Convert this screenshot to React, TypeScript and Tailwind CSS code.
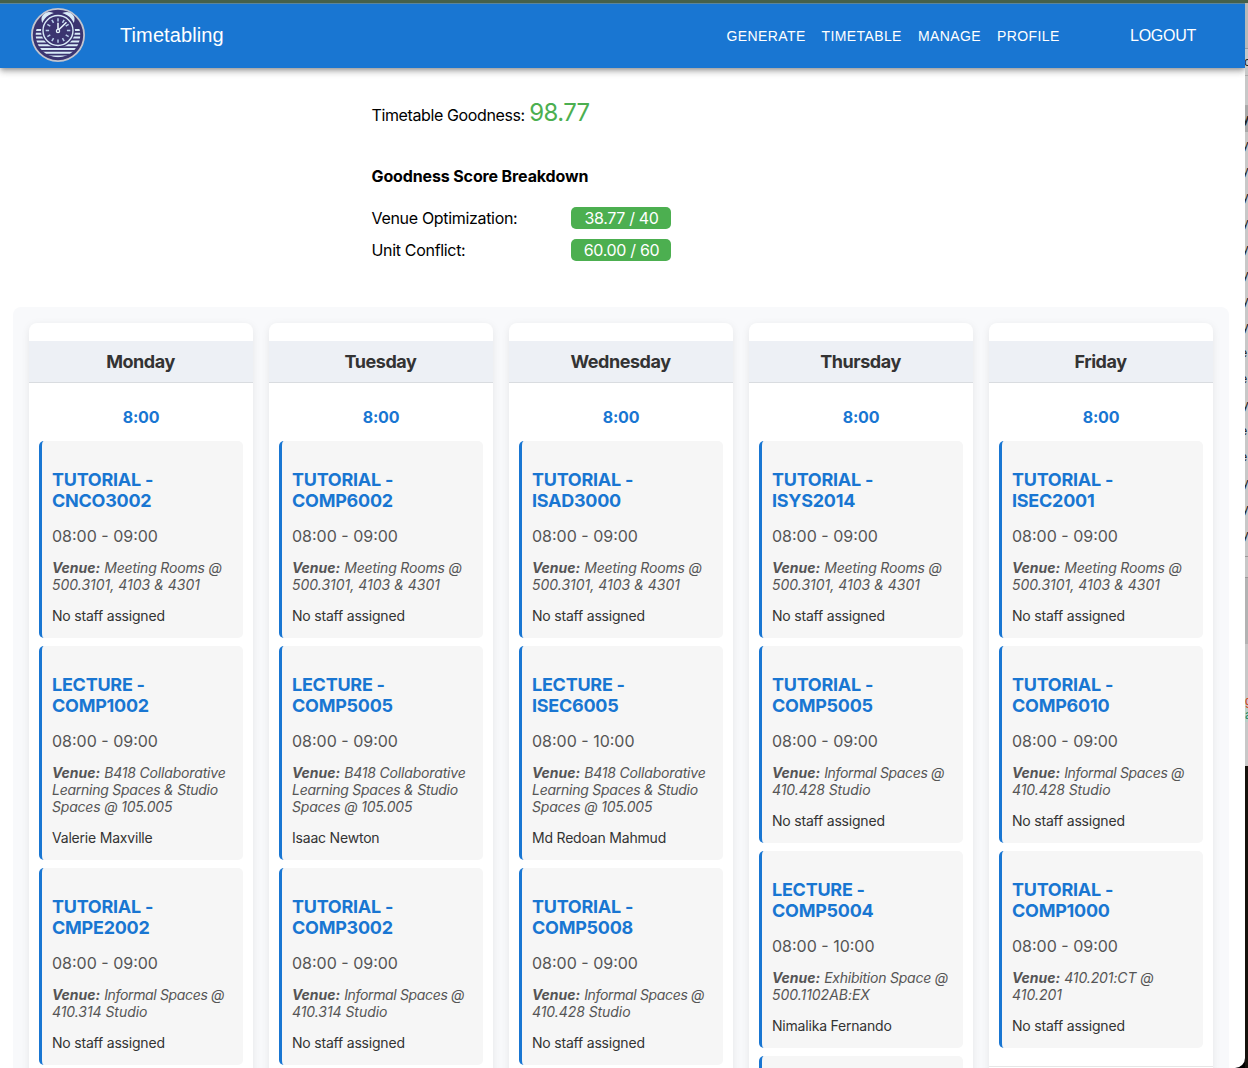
import React from "react";

type Line = [text: string, tracking: string];
type Session = { kind: string; code: string; time: string; venue: Line[]; staff: string };

const MEETING: Line[] = [["Meeting Rooms @", "tracking-[-0.17px]"], ["500.3101, 4103 & 4301", "tracking-[0px]"]];
const B418: Line[] = [["B418 Collaborative", "tracking-[-0.17px]"], ["Learning Spaces & Studio", "tracking-[-0.25px]"], ["Spaces @ 105.005", "tracking-[-0.2px]"]];
const INFORMAL_314: Line[] = [["Informal Spaces @", "tracking-[-0.35px]"], ["410.314 Studio", "tracking-[-0.06px]"]];
const INFORMAL_428: Line[] = [["Informal Spaces @", "tracking-[-0.35px]"], ["410.428 Studio", "tracking-[-0.06px]"]];
const EXHIBITION: Line[] = [["Exhibition Space @", "tracking-[-0.23px]"], ["500.1102AB:EX", "tracking-[-0.03px]"]];
const CT_ROOM: Line[] = [["410.201:CT @", "tracking-[-0.12px]"], ["410.201", "tracking-[0px]"]];
const NONE = "No staff assigned";
const HOUR = "08:00 - 09:00";
const TWO_HOURS = "08:00 - 10:00";

const s = (kind: string, code: string, time: string, venue: Line[], staff: string): Session => ({ kind, code, time, venue, staff });

const days: { name: string; sessions: Session[] }[] = [
  { name: "Monday", sessions: [s("TUTORIAL", "CNCO3002", HOUR, MEETING, NONE), s("LECTURE", "COMP1002", HOUR, B418, "Valerie Maxville"), s("TUTORIAL", "CMPE2002", HOUR, INFORMAL_314, NONE)] },
  { name: "Tuesday", sessions: [s("TUTORIAL", "COMP6002", HOUR, MEETING, NONE), s("LECTURE", "COMP5005", HOUR, B418, "Isaac Newton"), s("TUTORIAL", "COMP3002", HOUR, INFORMAL_314, NONE)] },
  { name: "Wednesday", sessions: [s("TUTORIAL", "ISAD3000", HOUR, MEETING, NONE), s("LECTURE", "ISEC6005", TWO_HOURS, B418, "Md Redoan Mahmud"), s("TUTORIAL", "COMP5008", HOUR, INFORMAL_428, NONE)] },
  { name: "Thursday", sessions: [s("TUTORIAL", "ISYS2014", HOUR, MEETING, NONE), s("TUTORIAL", "COMP5005", HOUR, INFORMAL_428, NONE), s("LECTURE", "COMP5004", TWO_HOURS, EXHIBITION, "Nimalika Fernando")] },
  { name: "Friday", sessions: [s("TUTORIAL", "ISEC2001", HOUR, MEETING, NONE), s("TUTORIAL", "COMP6010", HOUR, INFORMAL_428, NONE), s("TUTORIAL", "COMP1000", HOUR, CT_ROOM, NONE)] },
];

function Logo() {
  const stripes = [22, 25.8, 29.6, 33.4, 37.2, 41, 44.8, 48.6];
  return (
    <svg viewBox="0 0 54 54" className="-mt-[2px] size-[54px] shrink-0">
      <defs>
        <clipPath id="disc"><circle cx="27" cy="27" r="22.3" /></clipPath>
      </defs>
      <circle cx="27" cy="27" r="26.1" fill="#3b3470" stroke="#c3c5cf" strokeWidth="1.8" />
      <g clipPath="url(#disc)" stroke="#d9ebf8" strokeWidth="2">
        {stripes.map((y) => <path key={y} d={`M3 ${y}H51`} />)}
      </g>
      <circle cx="27" cy="22.5" r="17" fill="#3b3470" />
      <path d="M11.5 12.5C10.5 8 15 3.8 20 5.2C16 6.8 13.4 9.2 11.5 12.5Z M42.5 12.5C43.5 8 39 3.8 34 5.2C38 6.8 40.6 9.2 42.5 12.5Z" fill="#d9ebf8" stroke="#d9ebf8" strokeWidth="1.8" />
      <circle cx="27" cy="22.5" r="15" fill="#3b3470" stroke="#d9ebf8" strokeWidth="1.4" />
      {Array.from({ length: 12 }, (_, i) => (
        <path key={i} d="M27 10.2V13.6" transform={`rotate(${i * 30} 27 22.5)`} stroke="#b9d0ec" strokeWidth="1.5" />
      ))}
      <path d="M27 21.5V14.8M28 21.5L35.5 14.2" stroke="#e6f3fc" strokeWidth="1.6" />
      <circle cx="27" cy="23" r="1.6" fill="#3b3470" stroke="#e6f3fc" strokeWidth="1.3" />
    </svg>
  );
}

function NavBar() {
  return (
    <header className="z-10 flex h-[65px] shrink-0 items-center border-t border-[#5c8598] bg-[#1976d2] pl-[31px] font-['Liberation_Sans',sans-serif] text-white shadow-[0_2px_4px_-1px_rgba(0,0,0,0.25),0_4px_6px_rgba(0,0,0,0.18),0_1px_10px_rgba(0,0,0,0.12)]">
      <Logo />
      <div className="-mt-[2px] ml-[35px] text-[20px] leading-8 tracking-[0.1px]">Timetabling</div>
      <nav className="-mt-px ml-auto flex items-center gap-4 text-[14px] leading-6 tracking-[0.4px] [&>a]:whitespace-nowrap">
        <a className="w-[79px]">GENERATE</a>
        <a className="w-[80.5px]">TIMETABLE</a>
        <a className="w-[63px]">MANAGE</a>
        <a className="w-[63px]">PROFILE</a>
      </nav>
      <button className="-mt-px ml-[70px] mr-[48px] w-[67px] whitespace-nowrap text-left text-[16px] leading-6 tracking-[-0.25px]">LOGOUT</button>
    </header>
  );
}

function Score({ label, value }: { label: string; value: string }) {
  return (
    <div className="flex h-[22px] items-center">
      <span className="w-[199px] tracking-[-0.32px]">{label}</span>
      <span className="flex h-[22px] w-[100px] items-center justify-center rounded-[5px] bg-[#4caf50] pl-[2px] tracking-[-0.32px] text-white">{value}</span>
    </div>
  );
}

function Card({ session }: { session: Session }) {
  return (
    <article className="rounded-[5px] border-l-[3px] border-[#1976d2] bg-[#f6f6f6] pb-[14px] pl-[10px] pt-[28px]">
      <h3 className="text-[18px] font-bold leading-[21px] tracking-[-0.26px] text-[#1976d2]">
        {session.kind} -<br />{session.code}
      </h3>
      <p className="mt-4 text-[16px] leading-[19px] text-[#555]">{session.time}</p>
      <p className="mt-[13px] whitespace-nowrap text-[14px] italic leading-[17px] text-[#555]">
        <b className="font-bold">Venue:</b>{" "}
        {session.venue.map(([line, tracking], i) => (
          <React.Fragment key={line}>{i > 0 && <br />}<span className={tracking}>{line}</span></React.Fragment>
        ))}
      </p>
      <p className="mt-[14px] text-[14px] leading-[17px] tracking-[-0.2px] text-[#333]">{session.staff}</p>
    </article>
  );
}

function DayColumn({ name, sessions }: { name: string; sessions: Session[] }) {
  return (
    <section className="h-[1200px] w-[224px] rounded-lg bg-white pt-[18px] shadow-[0_2px_8px_rgba(0,0,0,0.08)]">
      <h2 className="flex h-[42px] items-center justify-center border-b border-[#d9dce0] bg-[#edf0f5] pr-px text-[18px] font-bold tracking-[-0.45px] text-[#333]">{name}</h2>
      <div className="px-[10px] pb-[18px]">
        <div className="flex h-[58px] items-center justify-center pt-[10px] text-[16px] font-bold tracking-[-0.15px] text-[#1976d2]">8:00</div>
        <div className="flex flex-col gap-2">
          {sessions.map((item) => <Card key={item.code} session={item} />)}
          {name === "Thursday" && <div className="h-[197px] rounded-[5px] border-l-[3px] border-[#1976d2] bg-[#f6f6f6]" />}
        </div>
      </div>
      {name === "Friday" && <hr className="border-[#e6e6e6]" />}
    </section>
  );
}

/* Sliver of the window that sits behind the browser. */
function BackgroundWindow() {
  const rows = "yyyyyyyyyeeyeeyyy".split("");
  return (
    <aside className="flex w-[3px] shrink-0 flex-col overflow-hidden bg-[#c8c8c8] font-['Liberation_Sans',sans-serif] text-[13px] leading-[26px] text-[#222]">
      <div className="h-[46px] shrink-0 border-b border-[#999] bg-[#b9b9b9]" />
      <div className="-ml-px h-[27px] shrink-0 border-b border-[#aaa]">c</div>
      <div className="h-[30px] shrink-0 border-b border-[#aaa]" />
      {rows.map((letter, i) => (
        <div key={i} className={i === 0 ? "h-[26px] shrink-0 bg-[#a8a8a8] font-bold" : "h-[26px] shrink-0"}>
          <span className={letter === "y" ? "-ml-[3px]" : "-ml-[5px]"}>{letter}</span>
        </div>
      ))}
      <div className="mt-[8px] h-[22px] shrink-0 border-y border-[#999]" />
      <div className="h-[66px] shrink-0 bg-[#b3b3b3]" />
      <div className="mt-[50px] h-[14px] shrink-0 text-[12px] leading-[14px] text-[#cc4016]">g</div>
      <div className="h-[14px] shrink-0 bg-[#bad0c8] text-[12px] leading-[14px] text-[#16845d]">a</div>
      <div className="h-[44px] shrink-0" />
      <div className="h-[320px] shrink-0 bg-[#15110c]" />
    </aside>
  );
}

export default function App() {
  return (
    <div className="flex h-[1068px] w-[1248px] flex-col overflow-hidden bg-[#45604b] pt-[3px] font-['Inter',sans-serif]">
      <div className="flex min-h-0 flex-1 bg-[linear-gradient(#c8c8c8_70%,#000_72%)]">
        <div className="flex w-[1245px] shrink-0 flex-col overflow-hidden rounded-br-[10px] bg-white">
          <NavBar />
          <main className="flex min-h-0 flex-1 flex-col overflow-hidden pl-[13px]">
            <section className="h-[239px] shrink-0 pl-[358.5px] pt-[27px] text-[16px] leading-5 text-black">
              <p className="flex h-[36px] items-baseline gap-[4.5px] leading-[36px]">
                <span className="tracking-[-0.38px]">Timetable Goodness:</span>
                <span className="text-[24px] tracking-[-0.65px] text-[#4caf50]">98.77</span>
              </p>
              <h4 className="mt-[35px] font-bold tracking-[-0.13px]">Goodness Score Breakdown</h4>
              <div className="mt-[21px] flex flex-col gap-[10px]">
                <Score label="Venue Optimization:" value="38.77 / 40" />
                <Score label="Unit Conflict:" value="60.00 / 60" />
              </div>
            </section>
            <section className="flex w-[1216px] shrink-0 gap-4 rounded-lg bg-[#f8f9fb] p-4">
              {days.map((day) => <DayColumn key={day.name} {...day} />)}
            </section>
          </main>
        </div>
        <BackgroundWindow />
      </div>
    </div>
  );
}
